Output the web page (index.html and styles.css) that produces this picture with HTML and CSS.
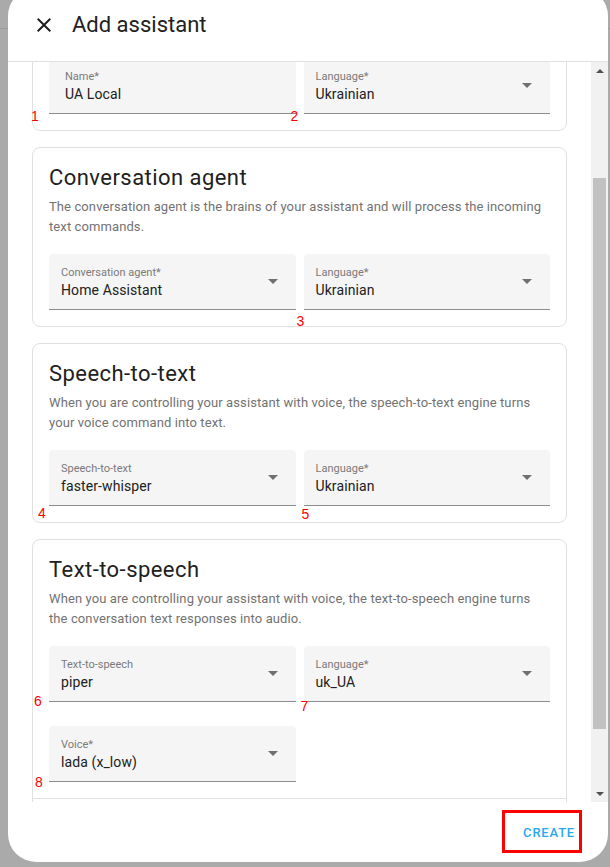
FILE: index.html
```html
<!DOCTYPE html>
<html>
	<head>
		<meta charset="utf-8">
		<title>Add assistant</title>
		<link rel="stylesheet" href="styles.css">
	</head>
	<body>
		<div class="dialog">
			<header class="dialog-header">
				<button class="icon-button" aria-label="Close">
					<svg viewBox="0 0 24 24"><path d="M19 6.41 17.59 5 12 10.59 6.41 5 5 6.41 10.59 12 5 17.59 6.41 19 12 13.41 17.59 19 19 17.59 13.41 12z"/></svg>
				</button>
				<h2 class="dialog-title">Add assistant</h2>
			</header>

			<div class="dialog-body">
				<div class="scroller">
					<div class="sections">
						<section class="section">
							<div class="form-grid">
								<div class="field text-field">
									<div class="field-text">
										<span class="field-label">Name*</span>
										<span class="field-value">UA Local</span>
									</div>
									<span class="mark mark-1">1</span>
								</div>
								<div class="field">
									<div class="field-text">
										<span class="field-label">Language*</span>
										<span class="field-value">Ukrainian</span>
									</div>
									<span class="select-arrow"></span>
									<span class="mark mark-2">2</span>
								</div>
							</div>
						</section>

						<section class="section">
							<div class="section-intro">
								<h3 class="section-title">Conversation agent</h3>
								<p class="section-text">The conversation agent is the brains of your assistant and will process the incoming text commands.</p>
							</div>
							<div class="form-grid">
								<div class="field">
									<div class="field-text">
										<span class="field-label">Conversation agent*</span>
										<span class="field-value">Home Assistant</span>
									</div>
									<span class="select-arrow"></span>
								</div>
								<div class="field">
									<div class="field-text">
										<span class="field-label">Language*</span>
										<span class="field-value">Ukrainian</span>
									</div>
									<span class="select-arrow"></span>
									<span class="mark mark-3">3</span>
								</div>
							</div>
						</section>

						<section class="section">
							<div class="section-intro">
								<h3 class="section-title">Speech-to-text</h3>
								<p class="section-text">When you are controlling your assistant with voice, the speech-to-text engine turns your voice command into text.</p>
							</div>
							<div class="form-grid">
								<div class="field">
									<div class="field-text">
										<span class="field-label">Speech-to-text</span>
										<span class="field-value">faster-whisper</span>
									</div>
									<span class="select-arrow"></span>
									<span class="mark mark-4">4</span>
								</div>
								<div class="field">
									<div class="field-text">
										<span class="field-label">Language*</span>
										<span class="field-value">Ukrainian</span>
									</div>
									<span class="select-arrow"></span>
									<span class="mark mark-5">5</span>
								</div>
							</div>
						</section>

						<section class="section section-with-actions">
							<div class="section-intro">
								<h3 class="section-title">Text-to-speech</h3>
								<p class="section-text">When you are controlling your assistant with voice, the text-to-speech engine turns the conversation text responses into audio.</p>
							</div>
							<div class="form-grid">
								<div class="field">
									<div class="field-text">
										<span class="field-label">Text-to-speech</span>
										<span class="field-value">piper</span>
									</div>
									<span class="select-arrow"></span>
									<span class="mark mark-6">6</span>
								</div>
								<div class="field">
									<div class="field-text">
										<span class="field-label">Language*</span>
										<span class="field-value">uk_UA</span>
									</div>
									<span class="select-arrow"></span>
									<span class="mark mark-7">7</span>
								</div>
								<div class="field">
									<div class="field-text">
										<span class="field-label">Voice*</span>
										<span class="field-value">lada (x_low)</span>
									</div>
									<span class="select-arrow"></span>
									<span class="mark mark-8">8</span>
								</div>
							</div>
							<div class="section-actions"></div>
						</section>
					</div>
				</div>

				<div class="scrollbar">
					<div class="scroll-btn scroll-up"></div>
					<div class="scroll-track"><div class="scroll-thumb"></div></div>
					<div class="scroll-btn scroll-down"></div>
				</div>
			</div>

			<footer class="dialog-footer">
				<div class="highlight">
					<button class="text-button">Create</button>
				</div>
			</footer>
		</div>
	</body>
</html>
```

FILE: styles.css
```css
* {
	box-sizing: border-box;
}

body {
	margin: 0;
	height: 867px;
	overflow: hidden;
	background: #aaaaaa linear-gradient(#9c9c9c, #9c9c9c) 0 28px / 100% 1px no-repeat;
	font-family: Roboto, "Noto Sans", sans-serif;
	color: #212121;
}

/* dialog sheet, top edge sits just above the window */
.dialog {
	width: 600px;
	height: 874px;
	margin: -12px 0 0 8px;
	background: #fff;
	border-radius: 28px;
	display: flex;
	flex-direction: column;
	overflow: hidden;
}

.dialog-header {
	flex: none;
	height: 74px;
	padding: 12px 24px;
	border-bottom: 1px solid #e0e0e0;
	display: flex;
	align-items: center;
	gap: 16px;
}

.icon-button {
	width: 24px;
	height: 24px;
	padding: 0;
	border: 0;
	background: none;
	color: #212121;
}

.icon-button svg {
	display: block;
	width: 24px;
	height: 24px;
	fill: currentColor;
}

.dialog-title {
	margin: 0;
	font-size: 22px;
	font-weight: 400;
	line-height: 28px;
}

.dialog-body {
	flex: 1;
	min-height: 0;
	display: flex;
}

.scroller {
	flex: 1;
	overflow: hidden;
	padding: 0 24px;
}

/* scrolled part way down */
.sections {
	margin-top: -21px;
	display: flex;
	flex-direction: column;
	gap: 16px;
}

.section {
	flex: none;
	border: 1px solid #e0e0e0;
	border-radius: 8px;
	padding: 16px;
}

.section-intro {
	margin-bottom: 17px;
}

.section-title {
	margin: 0 0 5px;
	font-size: 22px;
	font-weight: 400;
	line-height: 28px;
	letter-spacing: 0.45px;
}

.section-text {
	margin: 0;
	font-size: 13px;
	line-height: 20px;
	letter-spacing: 0.1px;
	color: #727272;
}

.form-grid {
	display: grid;
	grid-template-columns: 1fr 1fr;
	column-gap: 8px;
	row-gap: 24px;
}

.field {
	position: relative;
	height: 56px;
	padding: 0 18px 0 12px;
	background: #f5f5f5;
	border-bottom: 1px solid #8c8c8c;
	border-radius: 4px 4px 0 0;
	display: flex;
	align-items: center;
}

.text-field {
	padding-left: 16px;
}

.field-text {
	flex: 1;
	align-self: stretch;
	padding-top: 12px;
	display: flex;
	flex-direction: column;
}

.field-label {
	font-size: 11px;
	line-height: 14px;
	color: #7a7a7a;
}

.field-value {
	margin-top: 1px;
	font-size: 14px;
	line-height: 18px;
	letter-spacing: 0.1px;
	color: #212121;
}

.select-arrow {
	width: 0;
	height: 0;
	border-left: 5px solid transparent;
	border-right: 5px solid transparent;
	border-top: 5px solid #707070;
}

.section-with-actions {
	padding-bottom: 0;
}

.section-actions {
	height: 52px;
	margin: 16px -16px 0;
	border-top: 1px solid #e0e0e0;
}

/* red review numbers */
.mark {
	position: absolute;
	font: 14px/14px "Liberation Sans", Arial, sans-serif;
	color: #ff0000;
}

.mark-1 { left: -18px; top: 51px; }
.mark-2 { left: -13px; top: 51px; }
.mark-3 { left: -7px; top: 60px; }
.mark-4 { left: -11px; top: 56px; }
.mark-5 { left: -2px; top: 57px; }
.mark-6 { left: -15px; top: 48px; }
.mark-7 { left: -3px; top: 53px; }
.mark-8 { left: -14px; top: 49px; }

.scrollbar {
	flex: none;
	width: 17px;
	background: #f1f1f1;
	display: flex;
	flex-direction: column;
}

.scroll-btn {
	height: 17px;
	display: flex;
	align-items: center;
	justify-content: center;
}

.scroll-btn::before {
	content: "";
	border-left: 4px solid transparent;
	border-right: 4px solid transparent;
}

.scroll-up::before {
	border-bottom: 4px solid #505050;
}

.scroll-down::before {
	border-top: 4px solid #505050;
}

.scroll-track {
	flex: 1;
	padding: 0 2px;
}

.scroll-thumb {
	margin-top: 99px;
	height: 551px;
	background: #c1c1c1;
}

.dialog-footer {
	flex: none;
	height: 60px;
	padding: 8px 26px 0 0;
	display: flex;
	justify-content: flex-end;
	align-items: flex-start;
}

.highlight {
	border: 3px solid #ff0000;
}

.text-button {
	display: block;
	padding: 10px 4px 7px 18px;
	border: 0;
	background: none;
	font-family: Roboto, "Noto Sans", sans-serif;
	font-size: 13px;
	font-weight: 500;
	line-height: 20px;
	letter-spacing: 0.8px;
	text-transform: uppercase;
	color: #29a8ef;
}
```
